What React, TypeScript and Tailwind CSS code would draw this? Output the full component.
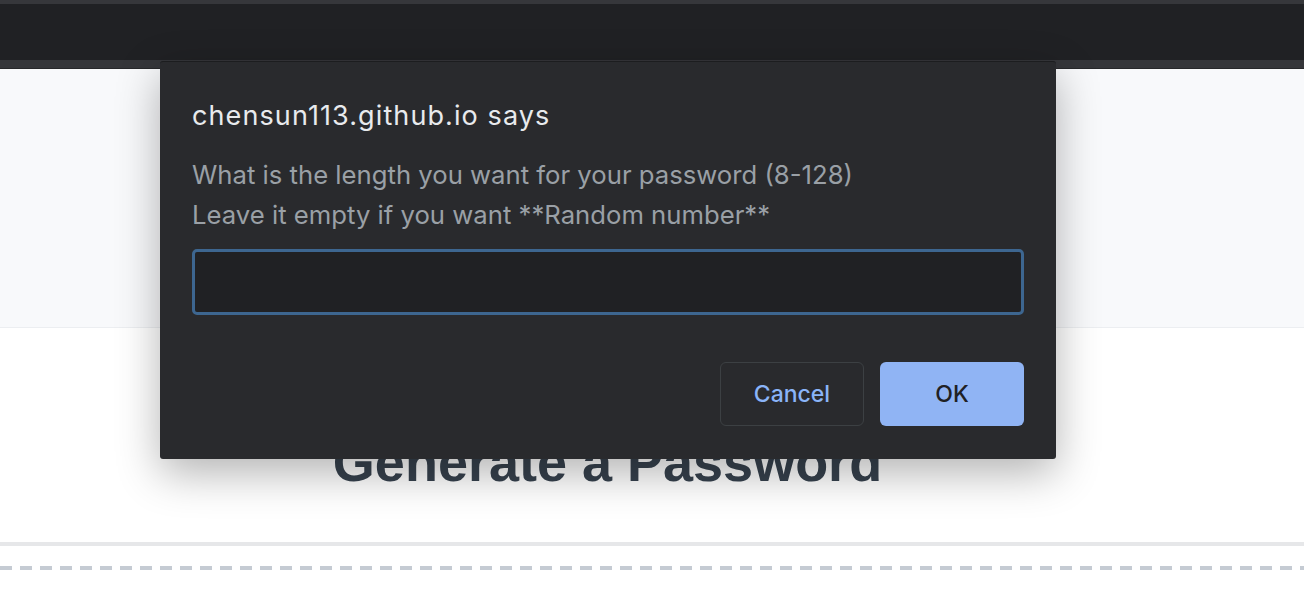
import React from "react";

const font = { fontFamily: "Inter, 'Noto Sans', sans-serif" };

const PromptDialog: React.FC = () => {
  return (
    <div
      className="absolute left-[160px] top-[61px] w-[896px] h-[398px] bg-[#292a2d] rounded-[3px] border-t border-[#1c1d1f] shadow-[0_14px_44px_rgba(0,0,0,0.3)] px-[32px] pt-[34px]"
      style={font}
    >
      <h1 className="text-[27px] leading-[40px] tracking-[1.1px] text-[#e8eaed]">chensun113.github.io says</h1>
      <div className="mt-[19px] text-[25.7px] leading-[40px] text-[#9aa0a6]">
        <p>What is the length you want for your password (8-128)</p>
        <p>Leave it empty if you want **Random number**</p>
      </div>
      <input
        className="mt-[14px] block w-[832px] h-[66px] rounded-[5px] border-[3px] border-[#3d6690] bg-[#202124] outline-none px-3 text-[22px] text-[#e8eaed]"
        defaultValue=""
      />
      <div className="mt-[47px] flex justify-end gap-[16px] w-[832px]">
        <button className="w-[144px] h-[64px] rounded-[6px] border border-[#3c4043] text-[23px] font-medium text-[#8ab4f8]">
          Cancel
        </button>
        <button className="w-[144px] h-[64px] rounded-[6px] bg-[#90b4f4] text-[23px] font-medium text-[#202124]">
          OK
        </button>
      </div>
    </div>
  );
};

export default function App() {
  return (
    <div className="relative w-[1304px] h-[598px] overflow-hidden bg-white">
      {/* browser chrome */}
      <div className="h-[4px] bg-[#36373b]" />
      <div className="h-[56px] bg-[#202124]" />
      <div className="h-[8px] bg-[#35363a]" />
      <div className="h-[1px] bg-[#27282b]" />

      {/* page */}
      <div className="h-[259px] bg-[#f8f9fb] border-b border-[#eceef1]" />
      <div className="flex justify-center pr-[89px] pt-[107px] h-[214px]">
        <h2
          className="text-[54px] font-bold leading-none text-[#37424e]"
          style={{ fontFamily: "'Liberation Sans', Arial, sans-serif" }}
        >
          Generate a Password
        </h2>
      </div>
      <div className="h-[4px] bg-[#e6e7e9]" />
      <div className="mt-[20px] h-[4px] bg-[repeating-linear-gradient(90deg,#c5cbd3_0_12px,transparent_12px_20px)]" />

      <PromptDialog />
    </div>
  );
}
